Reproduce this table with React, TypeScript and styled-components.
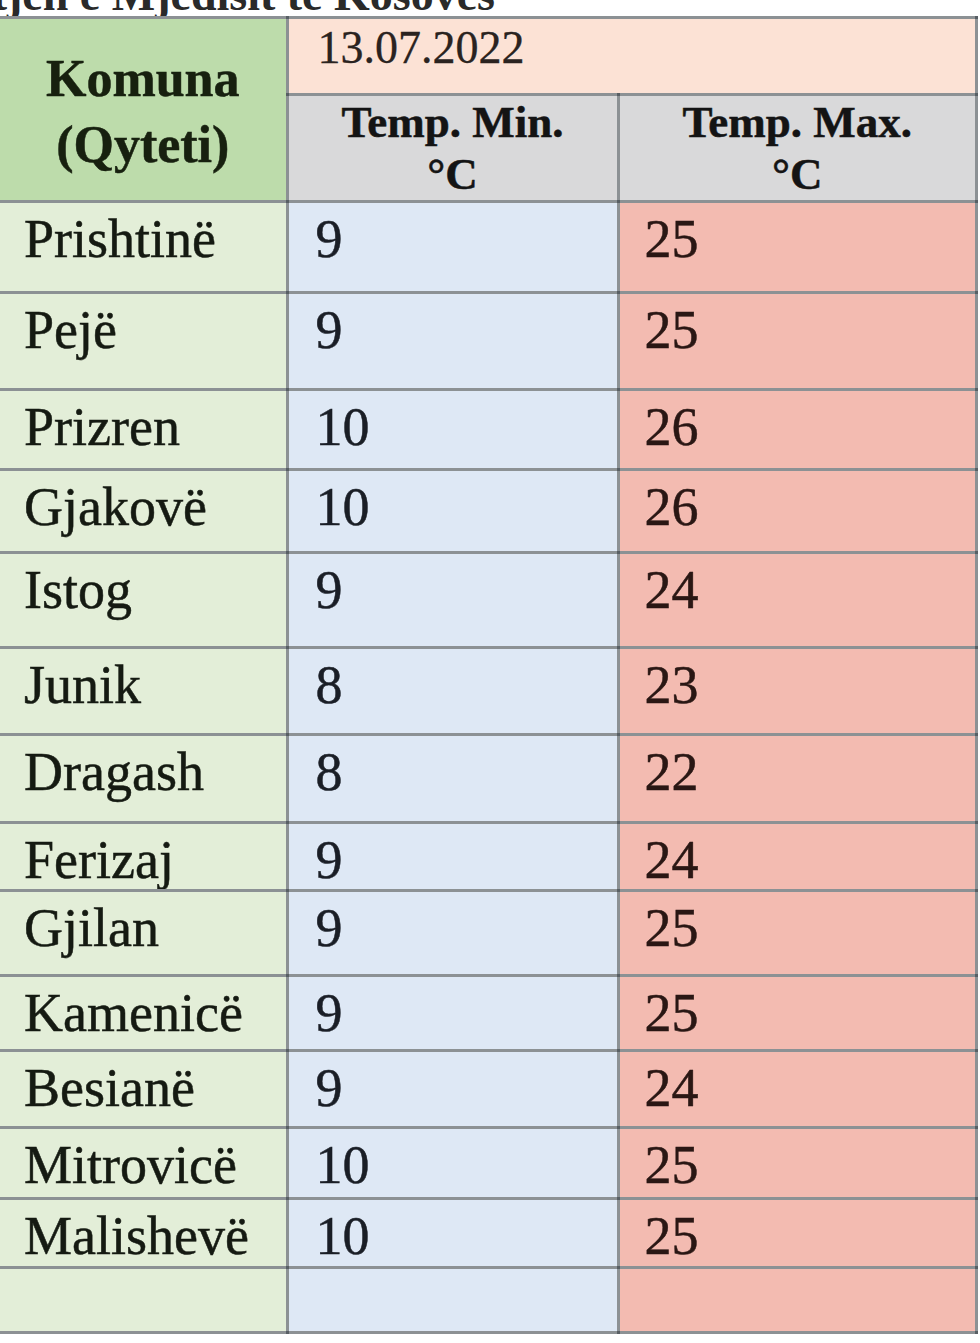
import styled, { createGlobalStyle } from 'styled-components';

const GlobalStyle = createGlobalStyle`
  html, body {
    margin: 0;
    padding: 0;
    background: #ffffff;
  }
  body {
    font-family: "Liberation Serif", "Times New Roman", serif;
    color: #1b1b1b;
  }
`;

interface RowData {
  city: string;
  min: string;
  max: string;
  height: number;
}

const rows: RowData[] = [
  { city: 'Prishtinë', min: '9', max: '25', height: 91 },
  { city: 'Pejë', min: '9', max: '25', height: 97 },
  { city: 'Prizren', min: '10', max: '26', height: 80 },
  { city: 'Gjakovë', min: '10', max: '26', height: 83 },
  { city: 'Istog', min: '9', max: '24', height: 95 },
  { city: 'Junik', min: '8', max: '23', height: 87 },
  { city: 'Dragash', min: '8', max: '22', height: 88 },
  { city: 'Ferizaj', min: '9', max: '24', height: 67 },
  { city: 'Gjilan', min: '9', max: '25', height: 85 },
  { city: 'Kamenicë', min: '9', max: '25', height: 75 },
  { city: 'Besianë', min: '9', max: '24', height: 77 },
  { city: 'Mitrovicë', min: '10', max: '25', height: 71 },
  { city: 'Malishevë', min: '10', max: '25', height: 69 },
];

function App() {
  return (
    <>
      <GlobalStyle />
      <Page>
        <Caption>
          <span>Agjencia për Mbrojtjen e Mjedisit të Kosovës</span>
        </Caption>
        <Table>
          <colgroup>
            <col style={{ width: 287 }} />
            <col style={{ width: 331 }} />
            <col />
          </colgroup>
          <thead>
            <Row $height={77}>
              <CityHead rowSpan={2}>
                Komuna
                <br />
                (Qyteti)
              </CityHead>
              <DateHead colSpan={2}>13.07.2022</DateHead>
            </Row>
            <Row $height={103}>
              <TempHead>
                Temp. Min.
                <br />
                °C
              </TempHead>
              <TempHead>
                Temp. Max.
                <br />
                °C
              </TempHead>
            </Row>
          </thead>
          <tbody>
            {rows.map((r) => (
              <Row key={r.city} $height={r.height}>
                <CityCell>{r.city}</CityCell>
                <MinCell>{r.min}</MinCell>
                <MaxCell>{r.max}</MaxCell>
              </Row>
            ))}
            <Row $height={65}>
              <CityCell />
              <MinCell />
              <MaxCell />
            </Row>
          </tbody>
        </Table>
      </Page>
    </>
  );
}

export default App;

const Page = styled.div`
  width: 980px;
  height: 1343px;
  overflow: hidden;
`;

const Caption = styled.div`
  width: 495px;
  height: 16px;
  overflow: hidden;
  display: flex;
  justify-content: flex-end;
  align-items: flex-end;

  span {
    white-space: nowrap;
    font-size: 46px;
    line-height: 46px;
    margin-bottom: -2px;
    font-weight: 700;
    color: #2a2a2a;
  }
`;

const Table = styled.table`
  width: 978px;
  border-collapse: collapse;
  table-layout: fixed;
  border-top: 3px solid rgba(70, 70, 70, 0.5);
`;

const Row = styled.tr<{ $height: number }>`
  height: ${({ $height }) => $height}px;
`;

const Cell = styled.td`
  border: 3px solid rgba(45, 55, 60, 0.55);
  padding: 0;
  vertical-align: top;
  font-size: 54px;
  line-height: 58px;
  white-space: nowrap;
  overflow: hidden;
  -webkit-text-stroke: 0.5px currentColor;

  &:first-child {
    border-left: none;
  }
`;

const CityHead = styled(Cell).attrs({ as: 'th' })`
  background: #bddcab;
  font-weight: 700;
  font-size: 52px;
  line-height: 66px;
  text-align: center;
  vertical-align: middle;
  padding-top: 4px;
  color: #17200f;
`;

const DateHead = styled(Cell).attrs({ as: 'th' })`
  background: #fce2d5;
  font-weight: 400;
  font-size: 46px;
  line-height: 50px;
  text-align: left;
  padding: 4px 0 0 29px;
  color: #2a2320;
  -webkit-text-stroke: 0.3px currentColor;
`;

const TempHead = styled(Cell).attrs({ as: 'th' })`
  background: #d9d9da;
  font-weight: 700;
  font-size: 45px;
  line-height: 52px;
  text-align: center;
  padding-top: 0;
  color: #141414;
`;

const CityCell = styled(Cell)`
  background: #e3eed8;
  padding: 7px 0 0 24px;
  color: #151a12;
`;

const MinCell = styled(Cell)`
  background: #dee8f5;
  padding: 7px 0 0 27px;
  color: #1a1e26;
`;

const MaxCell = styled(Cell)`
  background: #f3bbb1;
  padding: 7px 0 0 25px;
  color: #2a1714;
`;
